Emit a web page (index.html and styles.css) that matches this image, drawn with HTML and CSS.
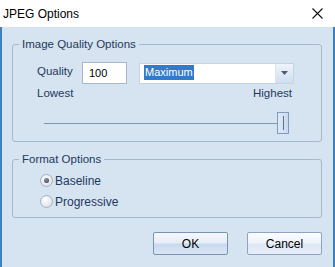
FILE: index.html
```html
<!DOCTYPE html>
<html lang="en">
<head>
    <meta charset="UTF-8">
    <title>JPEG Options</title>
    <link rel="stylesheet" href="styles.css">
</head>
<body>
<div class="window">
    <div class="titlebar">
        <span class="title">JPEG Options</span>
        <svg class="close" width="11" height="11" viewBox="0 0 11 11">
            <path d="M0.5 0.5 L10.5 10.5 M10.5 0.5 L0.5 10.5" stroke="#111" stroke-width="1.1" fill="none"/>
        </svg>
    </div>
    <div class="body">
        <fieldset class="group">
            <legend>Image Quality Options</legend>
            <div class="quality">
                <div class="qrow">
                    <span class="lbl">Quality</span>
                    <div class="num">100</div>
                    <div class="combo">
                        <span class="sel">Maximum</span>
                        <span class="drop">
                            <svg width="7" height="4" viewBox="0 0 7 4"><path d="M0 0 H7 L3.5 4 Z" fill="#4d5d74"/></svg>
                        </span>
                    </div>
                </div>
                <div class="ends"><span>Lowest</span><span>Highest</span></div>
                <div class="slider">
                    <div class="track"></div>
                    <div class="thumb"><span class="grip"></span></div>
                </div>
            </div>
        </fieldset>
        <fieldset class="group second">
            <legend>Format Options</legend>
            <div class="format">
                <div class="radio on"><span class="dot"></span>Baseline</div>
                <div class="radio"><span class="dot"></span>Progressive</div>
            </div>
        </fieldset>
        <div class="buttons">
            <button class="btn default">OK</button>
            <button class="btn">Cancel</button>
        </div>
    </div>
</div>
</body>
</html>
```

FILE: styles.css
```css
*{
    box-sizing: border-box;
    font-family: 'Liberation Sans', Arial, sans-serif;
}
body{
    margin: 0;
    background: #d6e4f2;
}
.window{
    width: 335px;
    height: 267px;
    overflow: hidden;
}
.titlebar{
    height: 27px;
    background: #ffffff;
    display: flex;
    align-items: center;
    justify-content: space-between;
    padding: 0 12px 0 3px;
}
.title{
    font-size: 12px;
    color: #000;
}
.close{
    display: block;
}
.body{
    height: 240px;
    border-left: 2px solid #3d7fc2;
    border-right: 2px solid #3d7fc2;
    padding: 10px 11px 0 10px;
    color: #1e395b;
    font-size: 11px;
}
.group{
    margin: 0;
    border: 1px solid #a4b8ce;
    border-radius: 3px;
    padding: 0;
    min-width: 0;
}
.group legend{
    margin-left: 6px;
    padding: 0 3px;
    line-height: 15px;
    font-size: 11.5px;
    color: #1e395b;
}
.second{
    margin-top: 10px;
}
.quality{
    padding: 10px 27px 7px 24px;
}
.qrow{
    display: flex;
    align-items: center;
}
.lbl{
    width: 45px;
    margin-top: -4px;
    font-size: 11.5px;
}
.num{
    width: 45px;
    height: 22px;
    background: #fff;
    border: 1px solid #a9b7c8;
    padding: 4px 6px;
    color: #000;
    line-height: 13px;
}
.combo{
    margin-left: 12px;
    flex: 1;
    height: 21px;
    background: #fff;
    border: 1px solid #c4d4e7;
    display: flex;
    align-items: center;
    padding-left: 4px;
}
.sel{
    background: #2f7bd0;
    color: #fff;
    line-height: 15px;
    padding: 0 1px;
    margin-top: -2px;
}
.drop{
    margin-left: auto;
    width: 18px;
    height: 19px;
    background: linear-gradient(#eef4fb, #d0def0);
    border-left: 1px solid #dbe6f3;
    display: flex;
    align-items: center;
    justify-content: center;
}
.drop svg{
    display: block;
}
.ends{
    display: flex;
    justify-content: space-between;
    margin-top: 2px;
    margin-right: 2px;
    line-height: 15px;
    font-size: 11.5px;
}
.slider{
    display: flex;
    align-items: center;
    margin: 11px 5px 0 7px;
}
.track{
    flex: 1;
    height: 1px;
    background: #7f97b5;
}
.thumb{
    width: 12px;
    height: 22px;
    border: 1px solid #7f9bc0;
    background: linear-gradient(90deg, #dfe9f6, #c9d9ee);
    display: flex;
    justify-content: center;
    align-items: center;
}
.grip{
    width: 1px;
    height: 14px;
    background: #5e7494;
}
.format{
    padding: 3px 0 5px 27px;
}
.radio{
    display: flex;
    align-items: center;
    height: 21px;
    font-size: 12px;
}
.radio .dot{
    width: 13px;
    height: 13px;
    border-radius: 50%;
    border: 1px solid #a6b1bf;
    background: radial-gradient(circle at 40% 35%, #ffffff, #d4dae2);
    margin-right: 2px;
    display: flex;
    align-items: center;
    justify-content: center;
}
.radio.on .dot::after{
    content: "";
    width: 5px;
    height: 5px;
    border-radius: 50%;
    background: radial-gradient(circle at 40% 35%, #8896a8, #2e3a4c);
}
.buttons{
    display: flex;
    justify-content: flex-end;
    gap: 19px;
    margin-top: 14px;
}
.btn{
    width: 75px;
    height: 23px;
    border: 1px solid #8ea3bf;
    border-radius: 2px;
    background: linear-gradient(#fbfdff 0%, #eef3fa 48%, #dde8f5 52%, #e6eef8 100%);
    font-size: 12px;
    color: #000;
    padding: 0;
}
.btn.default{
    background: linear-gradient(#f5f8fc 0%, #e5edf7 48%, #c8d9ee 52%, #d8e5f4 100%);
    border-color: #7b93b3;
}
```
